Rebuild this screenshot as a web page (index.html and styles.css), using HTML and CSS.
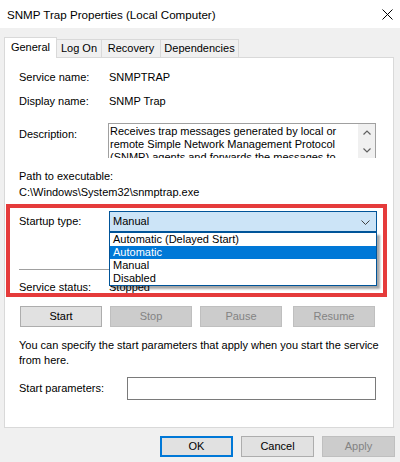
FILE: index.html
```html
<!DOCTYPE html>
<html>
<head>
<meta charset="utf-8">
<title>SNMP Trap Properties</title>
<link rel="stylesheet" href="styles.css">
</head>
<body>
<div class="window">
  <div class="titlebar">
    <span class="title">SNMP Trap Properties (Local Computer)</span>
    <svg class="close" width="11" height="11" viewBox="0 0 11 11"><path d="M0.5 0.5 L10.5 10.5 M10.5 0.5 L0.5 10.5" stroke="#000" stroke-width="1" fill="none"/></svg>
  </div>
  <div class="tabs">
    <div class="tab active t-general">General</div>
    <div class="tab t-logon">Log On</div>
    <div class="tab t-recovery">Recovery</div>
    <div class="tab t-deps">Dependencies</div>
  </div>
  <div class="panel">
    <div class="row r1"><span class="label">Service name:</span><span>SNMPTRAP</span></div>
    <div class="row r2"><span class="label">Display name:</span><span>SNMP Trap</span></div>
    <div class="row desc-row">
      <span class="label desc-label">Description:</span>
      <div class="desc">
        <div class="desc-text">Receives trap messages generated by local or remote Simple Network Management Protocol (SNMP) agents and forwards the messages to SNMP management programs running on this computer.</div>
        <div class="scroll">
          <svg width="8" height="5" viewBox="0 0 8 5"><path d="M0.5 4.5 L4 1 L7.5 4.5" stroke="#606060" stroke-width="1.2" fill="none"/></svg>
          <svg width="8" height="5" viewBox="0 0 8 5"><path d="M0.5 0.5 L4 4 L7.5 0.5" stroke="#606060" stroke-width="1.2" fill="none"/></svg>
        </div>
      </div>
    </div>
    <div class="path-label">Path to executable:</div>
    <div class="path">C:\Windows\System32\snmptrap.exe</div>
    <div class="row startup">
      <span class="label">Startup type:</span>
      <div class="combo">
        <span>Manual</span>
        <svg width="9" height="5" viewBox="0 0 9 5"><path d="M0.5 0.5 L4.5 4.5 L8.5 0.5" stroke="#404040" stroke-width="1" fill="none"/></svg>
      </div>
    </div>
    <div class="sep"></div>
    <div class="row status"><span class="label">Service status:</span><span>Stopped</span></div>
    <div class="actions">
      <button class="btn">Start</button>
      <button class="btn disabled">Stop</button>
      <button class="btn disabled">Pause</button>
      <button class="btn disabled resume">Resume</button>
    </div>
    <p class="hint"><span class="hint-line">You can specify the start parameters that apply when you start the service</span><br>from here.</p>
    <div class="row params">
      <span class="label wide">Start parameters:</span>
      <div class="input"></div>
    </div>

    <ul class="dropdown">
      <li>Automatic (Delayed Start)</li>
      <li class="selected">Automatic</li>
      <li>Manual</li>
      <li>Disabled</li>
    </ul>
    <div class="highlight"></div>
  </div>
  <div class="footer">
    <button class="btn fbtn default">OK</button>
    <button class="btn fbtn">Cancel</button>
    <button class="btn fbtn disabled">Apply</button>
  </div>
</div>
</body>
</html>
```

FILE: styles.css
```css
* { box-sizing: border-box; }
html, body { margin: 0; padding: 0; }
body {
  background: #f0f0f0;
  font-family: "Liberation Sans", Arial, sans-serif;
  font-size: 11px;
  line-height: 13px;
  color: #000;
  width: 400px;
  height: 462px;
  overflow: hidden;
}
.window { width: 400px; height: 462px; }

.titlebar {
  height: 28px;
  background: #fff;
  display: flex;
  align-items: center;
  justify-content: space-between;
  padding: 0 7px 0 7px;
}
.title { font-size: 11.6px; line-height: 14px; margin-top: 1px; }
.close { display: block; margin-top: 1px; }

.tabs {
  height: 29px;
  display: flex;
  align-items: flex-end;
  padding-left: 4px;
}
.tab {
  height: 18px;
  border: 1px solid #d9d9d9;
  border-bottom: none;
  margin-left: -1px;
  background: #f0f0f0;
  display: flex;
  align-items: center;
  justify-content: center;
}
.tab.active {
  height: 21px;
  background: #fff;
  margin-left: 0;
  margin-bottom: -1px;
  position: relative;
  z-index: 1;
  padding-bottom: 1px;
}
.t-general { width: 53px; }
.t-logon { width: 46px; }
.t-recovery { width: 60px; }
.t-deps { width: 79px; }

.panel {
  position: relative;
  margin-left: 4px;
  width: 390px;
  height: 371px;
  background: #fff;
  border: 1px solid #d9d9d9;
  padding: 0 16px 0 14px;
}

.row { display: flex; align-items: center; }
.label { width: 90px; flex: none; }
.label.wide { width: 108px; }

.r1 { margin-top: 13px; }
.r2 { margin-top: 11px; }

.desc-row { margin-top: 15px; align-items: flex-start; height: 35px; }
.desc-label { padding-top: 5px; }
.desc {
  margin-left: -1px;
  width: 268px;
  height: 35px;
  border: 1px solid #a0a0a0;
  border-bottom: none;
  display: flex;
  overflow: hidden;
}
.desc-text {
  flex: 1;
  padding: 1px 12px 0 1px;
  line-height: 13px;
}
.scroll {
  width: 17px;
  flex: none;
  background: #f0f0f0;
  display: flex;
  flex-direction: column;
  align-items: center;
  padding-top: 6px;
  gap: 13px;
}
.scroll svg { display: block; }

.path-label { margin-top: 12px; }
.path { margin-top: 3px; }

.startup { margin-top: 12px; }
.combo {
  width: 268px;
  height: 21px;
  background: #cce4f7;
  border: 1px solid #005499;
  display: flex;
  align-items: center;
  justify-content: space-between;
  padding: 0 6px 0 3px;
}
.combo svg { display: block; margin-top: 1px; }

.sep { margin-top: 37px; height: 1px; background: #a0a0a0; }

.status { margin-top: 11px; }

.actions { margin-top: 12px; display: flex; gap: 8px; padding-left: 1px; }
.btn {
  font-family: inherit;
  font-size: 11px;
  line-height: 13px;
  color: #000;
  background: #e1e1e1;
  border: 1px solid #adadad;
  height: 21px;
  width: 82px;
  padding: 0;
  margin: 0;
  display: flex;
  align-items: center;
  justify-content: center;
}
.btn.disabled { background: #cccccc; border-color: #bfbfbf; color: #838383; }
.btn.resume { margin-left: 3px; }

.hint { margin: 11px 0 0 0; line-height: 15px; }
.hint-line { white-space: nowrap; }

.params { margin-top: 9px; }
.input {
  width: 249px;
  height: 23px;
  border: 1px solid #7a7a7a;
  background: #fff;
}

.dropdown {
  position: absolute;
  left: 104px;
  top: 174px;
  width: 268px;
  height: 54px;
  margin: 0;
  padding: 0;
  list-style: none;
  background: #fff;
  border: 1px solid #005499;
  box-shadow: 3px 3px 2px rgba(0, 0, 0, 0.35);
  z-index: 2;
}
.dropdown li { height: 13px; line-height: 13px; padding-left: 3px; }
.dropdown li.selected { background: #0078d7; color: #fff; }

.highlight {
  position: absolute;
  left: 1px;
  top: 146px;
  width: 381px;
  height: 93px;
  border: 4px solid #e53b3b;
  z-index: 3;
  pointer-events: none;
}

.footer {
  margin-top: 8px;
  display: flex;
  justify-content: flex-end;
  gap: 8px;
  padding-right: 5px;
}
.fbtn { width: 73px; }
.fbtn.default { border: 2px solid #0078d7; }
```
